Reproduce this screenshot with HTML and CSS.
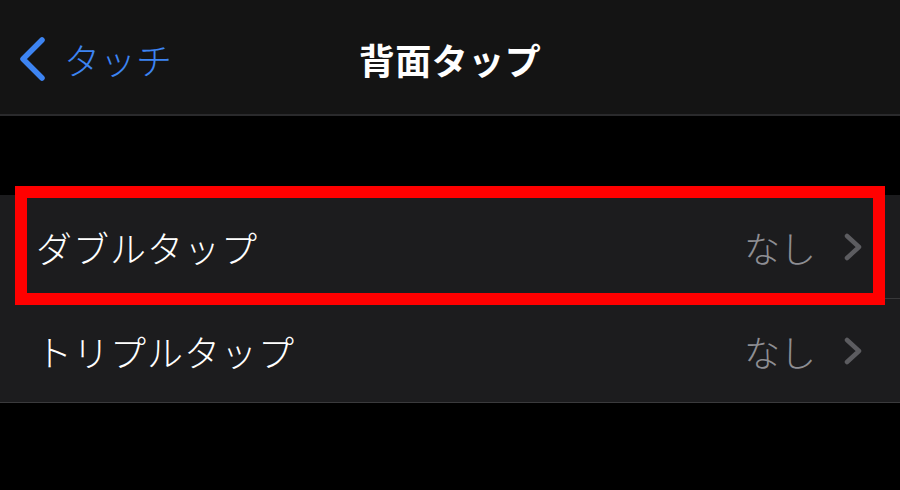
FILE: index.html
```html
<!DOCTYPE html>
<html lang="ja">
  <head>
    <meta charset="UTF-8" />
    <meta name="viewport" content="width=device-width, initial-scale=1.0" />
    <title>背面タップ</title>
    <link rel="stylesheet" href="styles.css">
  </head>
  <body>
    <header class="navbar">
      <a class="back" href="#">
        <svg class="back-icon" width="28" height="46" viewBox="0 0 28 46">
          <path d="M24 4 L5 23 L24 42" fill="none" stroke="#3d84f2" stroke-width="5.5" stroke-linecap="round" stroke-linejoin="round" />
        </svg>
        <span>タッチ</span>
      </a>
      <h1 class="title">背面タップ</h1>
      <div></div>
    </header>

    <div class="spacer"></div>

    <ul class="group">
      <li class="row">
        <span class="label">ダブルタップ</span>
        <span class="value">なし</span>
        <svg class="chevron" width="18" height="28" viewBox="0 0 18 28">
          <path d="M3 3 L15 14 L3 25" fill="none" stroke="#5c5c60" stroke-width="4.5" stroke-linecap="round" stroke-linejoin="round" />
        </svg>
        <div class="highlight"></div>
      </li>
      <li class="row">
        <span class="label">トリプルタップ</span>
        <span class="value">なし</span>
        <svg class="chevron" width="18" height="28" viewBox="0 0 18 28">
          <path d="M3 3 L15 14 L3 25" fill="none" stroke="#5c5c60" stroke-width="4.5" stroke-linecap="round" stroke-linejoin="round" />
        </svg>
      </li>
    </ul>
  </body>
</html>
```

FILE: styles.css
```css
body {
  margin: 0;
  padding: 0;
  background-color: #000;
  font-family: "Noto Sans CJK JP", "Noto Sans", sans-serif;
  color: #fff;
}

.navbar {
  display: grid;
  grid-template-columns: 1fr auto 1fr;
  align-items: center;
  box-sizing: border-box;
  height: 116px;
  padding-top: 4px;
  background-color: #141414;
  border-bottom: 2px solid #2a2a2c;
}

.back {
  display: flex;
  align-items: center;
  gap: 18px;
  padding-left: 18px;
  color: #3d84f2;
  text-decoration: none;
  font-size: 36px;
  font-weight: 300;
  line-height: 1;
}

.back-icon {
  display: block;
}

.title {
  margin: 0;
  font-size: 36px;
  font-weight: bold;
  line-height: 1;
  letter-spacing: 0.5px;
}

.spacer {
  height: 79px;
}

.group {
  list-style: none;
  margin: 0;
  padding: 0;
  background-color: #1c1c1e;
  border-bottom: 1px solid #3a3a3c;
}

.row {
  position: relative;
  display: flex;
  align-items: center;
  height: 103px;
  padding: 0 38px 0 36px;
}

.row + .row {
  border-top: 1px solid #38383a;
  margin-left: 36px;
  padding-left: 0;
}

.label {
  flex: 1;
  font-size: 36px;
  font-weight: 300;
  line-height: 1;
  letter-spacing: 1px;
}

.value {
  font-size: 36px;
  font-weight: 300;
  line-height: 1;
  color: #8e8e93;
  margin-right: 28px;
}

.chevron {
  display: block;
}

.highlight {
  position: absolute;
  z-index: 1;
  left: 15px;
  right: 15px;
  top: -9px;
  bottom: -7px;
  border: 12px solid #ff0000;
}
```
